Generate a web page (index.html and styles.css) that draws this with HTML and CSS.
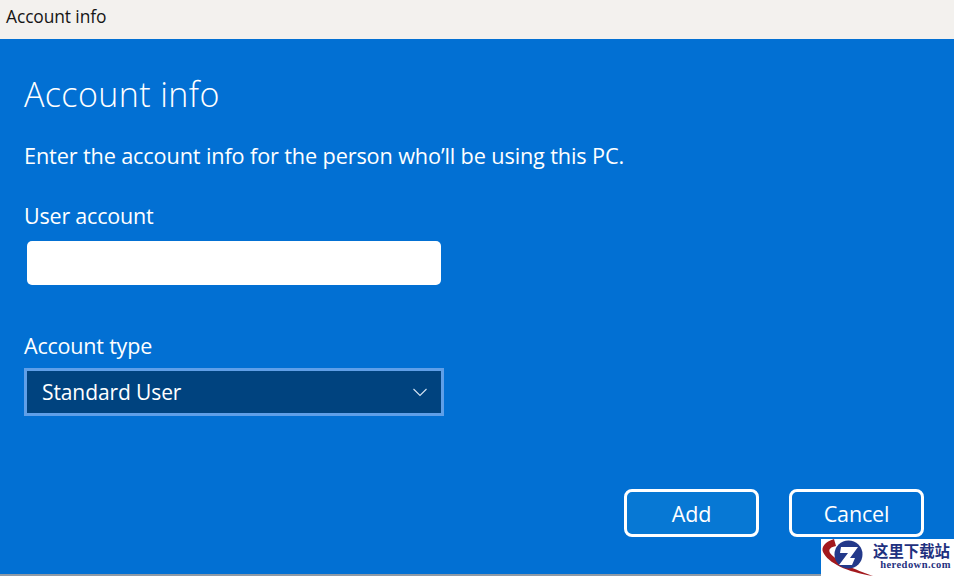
FILE: index.html
```html
<!DOCTYPE html>
<html lang="en">
<head>
  <meta charset="UTF-8" />
  <title>Account info</title>
  <link rel="stylesheet" href="styles.css">
</head>
<body>
  <div class="titlebar">Account info</div>
  <div class="dialog">
    <h1>Account info</h1>
    <p class="intro">Enter the account info for the person who’ll be using this PC.</p>

    <label class="label-user">User account</label>
    <div class="textbox"></div>

    <label class="label-type">Account type</label>
    <div class="select">
      <span>Standard User</span>
      <svg class="chevron" width="14" height="9" viewBox="0 0 14 9">
        <path d="M0.5 1 L7 7.5 L13.5 1" fill="none" stroke="#d5e4f3" stroke-width="1.1"/>
      </svg>
    </div>

    <div class="actions">
      <div class="button button-add">Add</div>
      <div class="button">Cancel</div>
    </div>
  </div>
  <div class="bottom-strip"></div>

  <div class="watermark">
    <svg class="wm-logo" width="52" height="37" viewBox="0 0 52 37">
      <path d="M13 0 C4 3 0 8 2 13 C7 24 26 33 52 37 C34 31 15 22 9 14 C7 10 10 8 15 7 Z" fill="#a31a1e"/>
      <circle cx="27.5" cy="15.5" r="14" fill="#23398a"/>
      <path d="M20 8 H37 L29 19 H34 L31 26 H18 L27 14 H19 Z" fill="#fff"/>
    </svg>
    <div class="wm-text">
      <div class="wm-cn">这里下载站</div>
      <div class="wm-en">heredown.com</div>
    </div>
  </div>
</body>
</html>
```

FILE: styles.css
```css
html, body {
  margin: 0;
  padding: 0;
}

body {
  width: 954px;
  height: 576px;
  overflow: hidden;
  position: relative;
  font-family: "Open Sans", "Noto Sans", sans-serif;
  background-color: #0270d3;
}

.titlebar {
  height: 39px;
  box-sizing: border-box;
  padding: 5px 0 0 6px;
  background-color: #f3f1ee;
  color: #161616;
  font-size: 17.4px;
  line-height: 22px;
  letter-spacing: -0.1px;
}

.dialog {
  height: 535px;
  box-sizing: border-box;
  padding: 32px 30px 0 24px;
  background-color: #0270d3;
  color: #fff;
}

h1 {
  margin: 0;
  font-size: 34px;
  line-height: 46px;
  font-weight: 300;
  letter-spacing: 0.4px;
}

.intro {
  margin: 24px 0 0;
  font-size: 21.7px;
  line-height: 30px;
  letter-spacing: -0.14px;
}

label {
  display: block;
  font-size: 21.5px;
  line-height: 30px;
  letter-spacing: -0.2px;
}

.label-user {
  margin-top: 30px;
}

.textbox {
  width: 414px;
  height: 44px;
  margin: 10px 0 0 3px;
  background-color: #fff;
  border-radius: 5px;
}

.label-type {
  margin-top: 46px;
}

.select {
  width: 420px;
  height: 48px;
  margin-top: 7px;
  box-sizing: border-box;
  padding: 0 14px 0 15px;
  display: flex;
  align-items: center;
  justify-content: space-between;
  background-color: #00437f;
  border: 3px solid #5f9fe8;
  font-size: 21px;
  letter-spacing: -0.1px;
}

.actions {
  display: flex;
  justify-content: flex-end;
  gap: 30px;
  margin-top: 73px;
}

.button {
  width: 135px;
  height: 48px;
  box-sizing: border-box;
  display: flex;
  align-items: center;
  justify-content: center;
  border: 3px solid #fff;
  border-radius: 8px;
  font-size: 21.5px;
  letter-spacing: -0.15px;
}

.button-add {
  background-color: #0778d4;
}

.bottom-strip {
  height: 2px;
  background-color: #8f9aa6;
}

.watermark {
  position: absolute;
  right: 0;
  bottom: 0;
  width: 133px;
  height: 37px;
  display: flex;
  justify-content: space-between;
  background-color: #fff;
}

.wm-logo {
  flex: none;
}

.wm-text {
  text-align: right;
  padding: 3px 3px 0 0;
}

.wm-cn {
  font-family: "Noto Sans CJK SC", sans-serif;
  font-size: 15.4px;
  line-height: 17px;
  font-weight: 700;
  padding-right: 1px;
  color: #1f3180;
}

.wm-en {
  font-family: "Liberation Serif", serif;
  font-size: 10.5px;
  line-height: 10px;
  margin-top: 1px;
  font-weight: 700;
  letter-spacing: 0.45px;
  color: #1f3180;
}
```
